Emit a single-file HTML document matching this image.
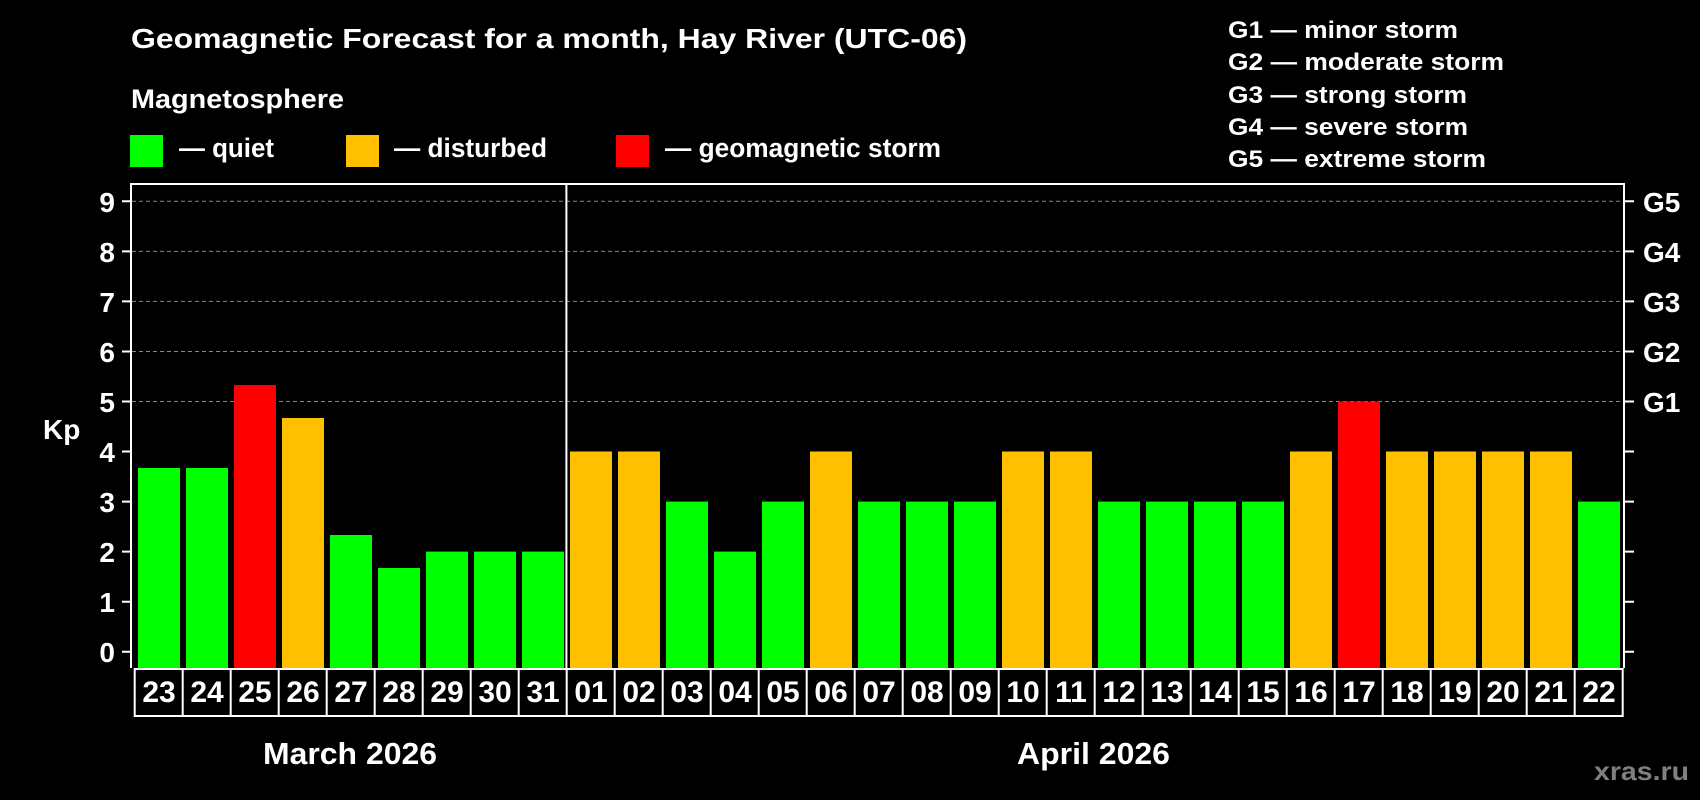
<!DOCTYPE html>
<html><head><meta charset="utf-8"><style>
html,body{margin:0;padding:0;background:#000;}
svg{display:block;}
text{font-family:"Liberation Sans",Arial,sans-serif;font-weight:bold;fill:#fff;}
.n{font-family:"Liberation Sans Narrow","Liberation Sans",Arial,sans-serif;}
</style></head><body>
<svg width="1700" height="800" viewBox="0 0 1700 800" xmlns="http://www.w3.org/2000/svg">
<rect width="1700" height="800" fill="#000"/>
<text class="n" x="131" y="48" font-size="28" textLength="836" lengthAdjust="spacingAndGlyphs">Geomagnetic Forecast for a month, Hay River (UTC-06)</text>
<text class="n" x="131" y="108" font-size="27" textLength="213" lengthAdjust="spacingAndGlyphs">Magnetosphere</text>
<rect x="130" y="135" width="33" height="32" fill="#00ff00"/>
<text class="n" x="179" y="157" font-size="27" textLength="95" lengthAdjust="spacingAndGlyphs">— quiet</text>
<rect x="346" y="135" width="33" height="32" fill="#ffc000"/>
<text class="n" x="394" y="157" font-size="27" textLength="153" lengthAdjust="spacingAndGlyphs">— disturbed</text>
<rect x="616" y="135" width="33" height="32" fill="#ff0000"/>
<text class="n" x="665" y="157" font-size="27" textLength="276" lengthAdjust="spacingAndGlyphs">— geomagnetic storm</text>

<g font-size="24">
<text x="1228" y="38" textLength="230" lengthAdjust="spacingAndGlyphs">G1 — minor storm</text>
<text x="1228" y="70" textLength="276" lengthAdjust="spacingAndGlyphs">G2 — moderate storm</text>
<text x="1228" y="103" textLength="239" lengthAdjust="spacingAndGlyphs">G3 — strong storm</text>
<text x="1228" y="135" textLength="240" lengthAdjust="spacingAndGlyphs">G4 — severe storm</text>
<text x="1228" y="167" textLength="258" lengthAdjust="spacingAndGlyphs">G5 — extreme storm</text>
</g>

<g stroke="#888" stroke-width="1" stroke-dasharray="4,3">
<line x1="132" x2="1623" y1="201.3" y2="201.3"/>
<line x1="132" x2="1623" y1="251.4" y2="251.4"/>
<line x1="132" x2="1623" y1="301.4" y2="301.4"/>
<line x1="132" x2="1623" y1="351.5" y2="351.5"/>
<line x1="132" x2="1623" y1="401.5" y2="401.5"/>
</g>

<g>
<rect x="138" y="468" width="42" height="200" fill="#00ff00"/>
<rect x="186" y="468" width="42" height="200" fill="#00ff00"/>
<rect x="234" y="385" width="42" height="283" fill="#ff0000"/>
<rect x="282" y="418" width="42" height="250" fill="#ffc000"/>
<rect x="330" y="535" width="42" height="133" fill="#00ff00"/>
<rect x="378" y="568" width="42" height="100" fill="#00ff00"/>
<rect x="426" y="551.6" width="42" height="116.4" fill="#00ff00"/>
<rect x="474" y="551.6" width="42" height="116.4" fill="#00ff00"/>
<rect x="522" y="551.6" width="42" height="116.4" fill="#00ff00"/>
<rect x="570" y="451.5" width="42" height="216.5" fill="#ffc000"/>
<rect x="618" y="451.5" width="42" height="216.5" fill="#ffc000"/>
<rect x="666" y="501.6" width="42" height="166.4" fill="#00ff00"/>
<rect x="714" y="551.6" width="42" height="116.4" fill="#00ff00"/>
<rect x="762" y="501.6" width="42" height="166.4" fill="#00ff00"/>
<rect x="810" y="451.5" width="42" height="216.5" fill="#ffc000"/>
<rect x="858" y="501.6" width="42" height="166.4" fill="#00ff00"/>
<rect x="906" y="501.6" width="42" height="166.4" fill="#00ff00"/>
<rect x="954" y="501.6" width="42" height="166.4" fill="#00ff00"/>
<rect x="1002" y="451.5" width="42" height="216.5" fill="#ffc000"/>
<rect x="1050" y="451.5" width="42" height="216.5" fill="#ffc000"/>
<rect x="1098" y="501.6" width="42" height="166.4" fill="#00ff00"/>
<rect x="1146" y="501.6" width="42" height="166.4" fill="#00ff00"/>
<rect x="1194" y="501.6" width="42" height="166.4" fill="#00ff00"/>
<rect x="1242" y="501.6" width="42" height="166.4" fill="#00ff00"/>
<rect x="1290" y="451.5" width="42" height="216.5" fill="#ffc000"/>
<rect x="1338" y="401.5" width="42" height="266.5" fill="#ff0000"/>
<rect x="1386" y="451.5" width="42" height="216.5" fill="#ffc000"/>
<rect x="1434" y="451.5" width="42" height="216.5" fill="#ffc000"/>
<rect x="1482" y="451.5" width="42" height="216.5" fill="#ffc000"/>
<rect x="1530" y="451.5" width="42" height="216.5" fill="#ffc000"/>
<rect x="1578" y="501.6" width="42" height="166.4" fill="#00ff00"/>
</g>

<g font-size="30" text-anchor="middle">
<text x="159" y="702">23</text><text x="207" y="702">24</text><text x="255" y="702">25</text>
<text x="303" y="702">26</text><text x="351" y="702">27</text><text x="399" y="702">28</text>
<text x="447" y="702">29</text><text x="495" y="702">30</text><text x="543" y="702">31</text>
<text x="591" y="702">01</text><text x="639" y="702">02</text><text x="687" y="702">03</text>
<text x="735" y="702">04</text><text x="783" y="702">05</text><text x="831" y="702">06</text>
<text x="879" y="702">07</text><text x="927" y="702">08</text><text x="975" y="702">09</text>
<text x="1023" y="702">10</text><text x="1071" y="702">11</text><text x="1119" y="702">12</text>
<text x="1167" y="702">13</text><text x="1215" y="702">14</text><text x="1263" y="702">15</text>
<text x="1311" y="702">16</text><text x="1359" y="702">17</text><text x="1407" y="702">18</text>
<text x="1455" y="702">19</text><text x="1503" y="702">20</text><text x="1551" y="702">21</text>
<text x="1599" y="702">22</text>
</g>

<g stroke="#fff" stroke-width="2" fill="none">
<path d="M131 668 V184 H1624 V668"/>
<line x1="566.4" y1="184" x2="566.4" y2="668"/>
<rect x="134.7" y="669" width="1488" height="47"/>
<path d="M182.7 669V716M230.7 669V716M278.7 669V716M326.7 669V716M374.7 669V716M422.7 669V716M470.7 669V716M518.7 669V716M566.7 669V716M614.7 669V716M662.7 669V716M710.7 669V716M758.7 669V716M806.7 669V716M854.7 669V716M902.7 669V716M950.7 669V716M998.7 669V716M1046.7 669V716M1094.7 669V716M1142.7 669V716M1190.7 669V716M1238.7 669V716M1286.7 669V716M1334.7 669V716M1382.7 669V716M1430.7 669V716M1478.7 669V716M1526.7 669V716M1574.7 669V716"/>
<path d="M122 651.7H131M122 601.7H131M122 551.6H131M122 501.6H131M122 451.5H131M122 401.5H131M122 351.5H131M122 301.4H131M122 251.4H131M122 201.3H131"/>
<path d="M1624 651.7H1634M1624 601.7H1634M1624 551.6H1634M1624 501.6H1634M1624 451.5H1634M1624 401.5H1634M1624 351.5H1634M1624 301.4H1634M1624 251.4H1634M1624 201.3H1634"/>
</g>

<g font-size="28" text-anchor="end">
<text x="115" y="662">0</text><text x="115" y="612">1</text><text x="115" y="562">2</text>
<text x="115" y="512">3</text><text x="115" y="462">4</text><text x="115" y="412">5</text>
<text x="115" y="362">6</text><text x="115" y="312">7</text><text x="115" y="262">8</text>
<text x="115" y="212">9</text>
</g>
<text x="43" y="439" font-size="28">Kp</text>
<g font-size="28">
<text x="1643" y="212">G5</text>
<text x="1643" y="262">G4</text>
<text x="1643" y="312">G3</text>
<text x="1643" y="362">G2</text>
<text x="1643" y="412">G1</text>
</g>
<text x="263" y="764" font-size="31" textLength="174" lengthAdjust="spacingAndGlyphs">March 2026</text>
<text x="1017" y="764" font-size="31" textLength="153" lengthAdjust="spacingAndGlyphs">April 2026</text>
<text x="1594" y="780" font-size="26" style="fill:#808080" textLength="95" lengthAdjust="spacingAndGlyphs">xras.ru</text>
</svg>
</body></html>
